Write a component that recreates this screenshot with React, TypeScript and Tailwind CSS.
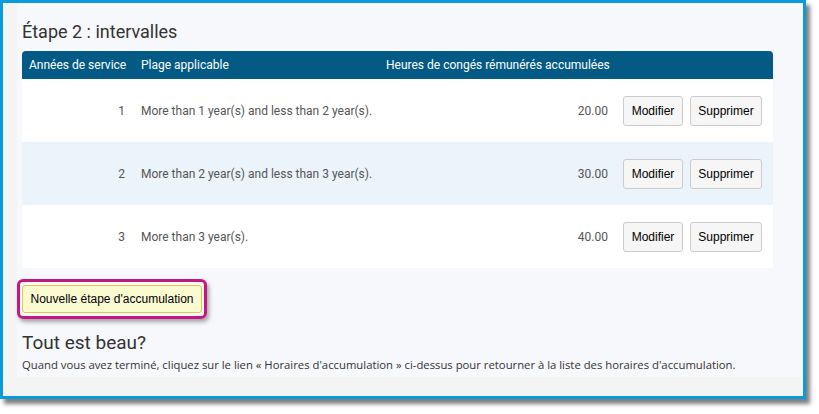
import React from "react";

type Step = { years: number; range: string; hours: string };

const steps: Step[] = [
  { years: 1, range: "More than 1 year(s) and less than 2 year(s).", hours: "20.00" },
  { years: 2, range: "More than 2 year(s) and less than 3 year(s).", hours: "30.00" },
  { years: 3, range: "More than 3 year(s).", hours: "40.00" },
];

const roboto = { fontFamily: "Roboto, 'Liberation Sans', sans-serif" };
const arial = { fontFamily: "'Liberation Sans', Arial, sans-serif" };

function GrayButton({ children, w }: { children: React.ReactNode; w: string }) {
  return (
    <button
      className={`h-[30px] ${w} rounded-[3px] border border-[#cccccc] bg-[#f6f6f6] text-[12px] text-black`}
      style={arial}
    >
      {children}
    </button>
  );
}

export default function App() {
  return (
    <div className="h-[414px] w-[819px] bg-white">
      <div className="h-[399px] w-[806px] border-[3px] border-[#0a9bdb] bg-[#f4f4f4] shadow-[4px_5px_4px_rgba(0,0,0,0.5)]">
        <div className="ml-[14px] h-[374px] bg-[#f7f8fc] pl-[5px] pr-[30px]">
          <h2 className="pt-[18px] text-[18px] leading-[22px] text-[#333]" style={roboto}>
            Étape 2 : intervalles
          </h2>

          <div className="mt-[8px] w-[751px] overflow-hidden rounded-[4px] bg-white" style={roboto}>
            <div className="flex h-[28px] items-center bg-[#035a84] text-[12px] text-white">
              <div className="w-[111px] pl-[7px]">Années de service</div>
              <div className="w-[245px] pl-[8px]">Plage applicable</div>
              <div className="w-[237px] pl-[8px]">Heures de congés rémunérés accumulées</div>
              <div className="flex-1" />
            </div>
            {steps.map((s, i) => (
              <div
                key={s.years}
                className={`flex h-[63px] items-center text-[12px] text-[#555] ${i % 2 === 1 ? "bg-[#ebf3fb]" : "bg-white"}`}
              >
                <div className="w-[111px] pr-[8px] text-right">{s.years}</div>
                <div className="w-[245px] pl-[8px]">{s.range}</div>
                <div className="w-[237px] pr-[7px] text-right">{s.hours}</div>
                <div className="flex gap-[7px] pl-[8px]">
                  <GrayButton w="w-[60px]">Modifier</GrayButton>
                  <GrayButton w="w-[72px]">Supprimer</GrayButton>
                </div>
              </div>
            ))}
          </div>

          <div className="ml-[-5px] mt-[11px] inline-flex rounded-[6px] border-[3px] border-[#c2197f] px-[2px] py-[3px] shadow-[2px_3px_4px_rgba(0,0,0,0.35)]">
            <button
              className="h-[28px] w-[180px] rounded-[3px] border border-[#e8c440] bg-[#fbfbd2] text-[12px] text-black"
              style={arial}
            >
              Nouvelle étape d'accumulation
            </button>
          </div>

          <h3 className="mt-[13px] text-[19px] leading-[22px] text-[#333]" style={roboto}>
            Tout est beau?
          </h3>
          <p
            className="mt-[3px] text-[11.3px] leading-[15px] text-[#333]"
            style={{ fontFamily: "'Open Sans', 'Noto Sans', sans-serif" }}
          >
            Quand vous avez terminé, cliquez sur le lien « Horaires d'accumulation » ci-dessus pour retourner à la liste des horaires d'accumulation.
          </p>
        </div>
      </div>
    </div>
  );
}
